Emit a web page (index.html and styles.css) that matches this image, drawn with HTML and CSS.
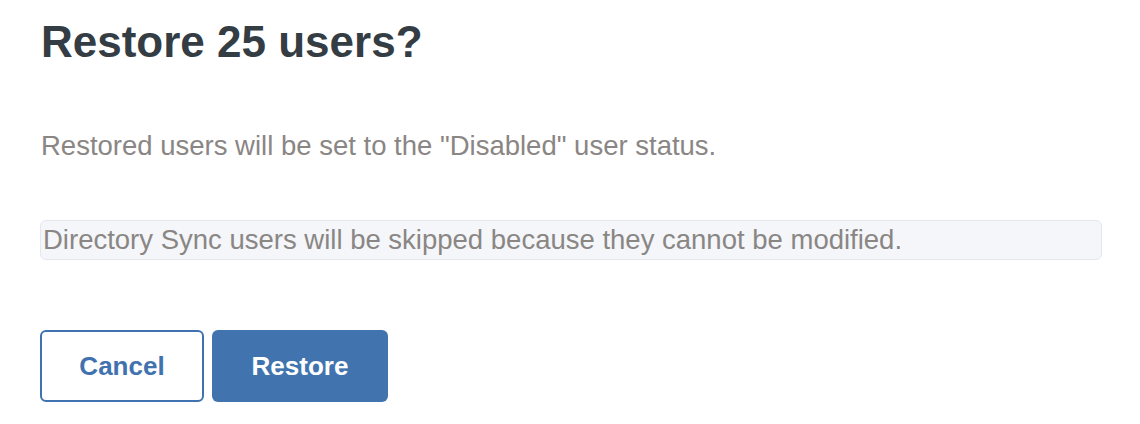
FILE: index.html
```html
<!DOCTYPE html>
<html>

<head>
    <title>Restore users</title>
    <link rel="stylesheet" href="styles.css">
</head>

<body>
    <div class="dialog">
        <h1>Restore 25 users?</h1>
        <p class="message">Restored users will be set to the "Disabled" user status.</p>
        <div class="notice">Directory Sync users will be skipped because they cannot be modified.</div>
        <div class="actions">
            <button class="btn btn-cancel">Cancel</button>
            <button class="btn btn-primary">Restore</button>
        </div>
    </div>
</body>

</html>
```

FILE: styles.css
```css
body {
    font-family: "Liberation Sans", Arial, sans-serif;
    background-color: #fff;
    margin: 0;
    padding: 0;
}

.dialog {
    padding: 16px 38px 0 40px;
}

h1 {
    font-size: 44px;
    line-height: 52px;
    font-weight: bold;
    color: #343c44;
    margin: 0 0 0 1px;
}

.message {
    font-size: 27.5px;
    line-height: 32px;
    color: #8a8684;
    margin: 62px 0 0 1px;
}

.notice {
    margin-top: 58px;
    height: 38px;
    line-height: 38px;
    padding: 0 2px;
    font-size: 27.5px;
    color: #8a8684;
    background-color: #f4f6fa;
    border: 1px solid #e3e7ee;
    border-radius: 6px;
}

.actions {
    display: flex;
    gap: 8px;
    margin-top: 70px;
}

.btn {
    font-family: "Liberation Sans", Arial, sans-serif;
    font-size: 26px;
    font-weight: bold;
    height: 72px;
    border-radius: 6px;
    cursor: pointer;
}

.btn-cancel {
    width: 164px;
    background-color: #fff;
    color: #3f72ae;
    border: 2px solid #3f72ae;
}

.btn-primary {
    width: 176px;
    background-color: #4174ae;
    color: #fff;
    border: none;
}
```
